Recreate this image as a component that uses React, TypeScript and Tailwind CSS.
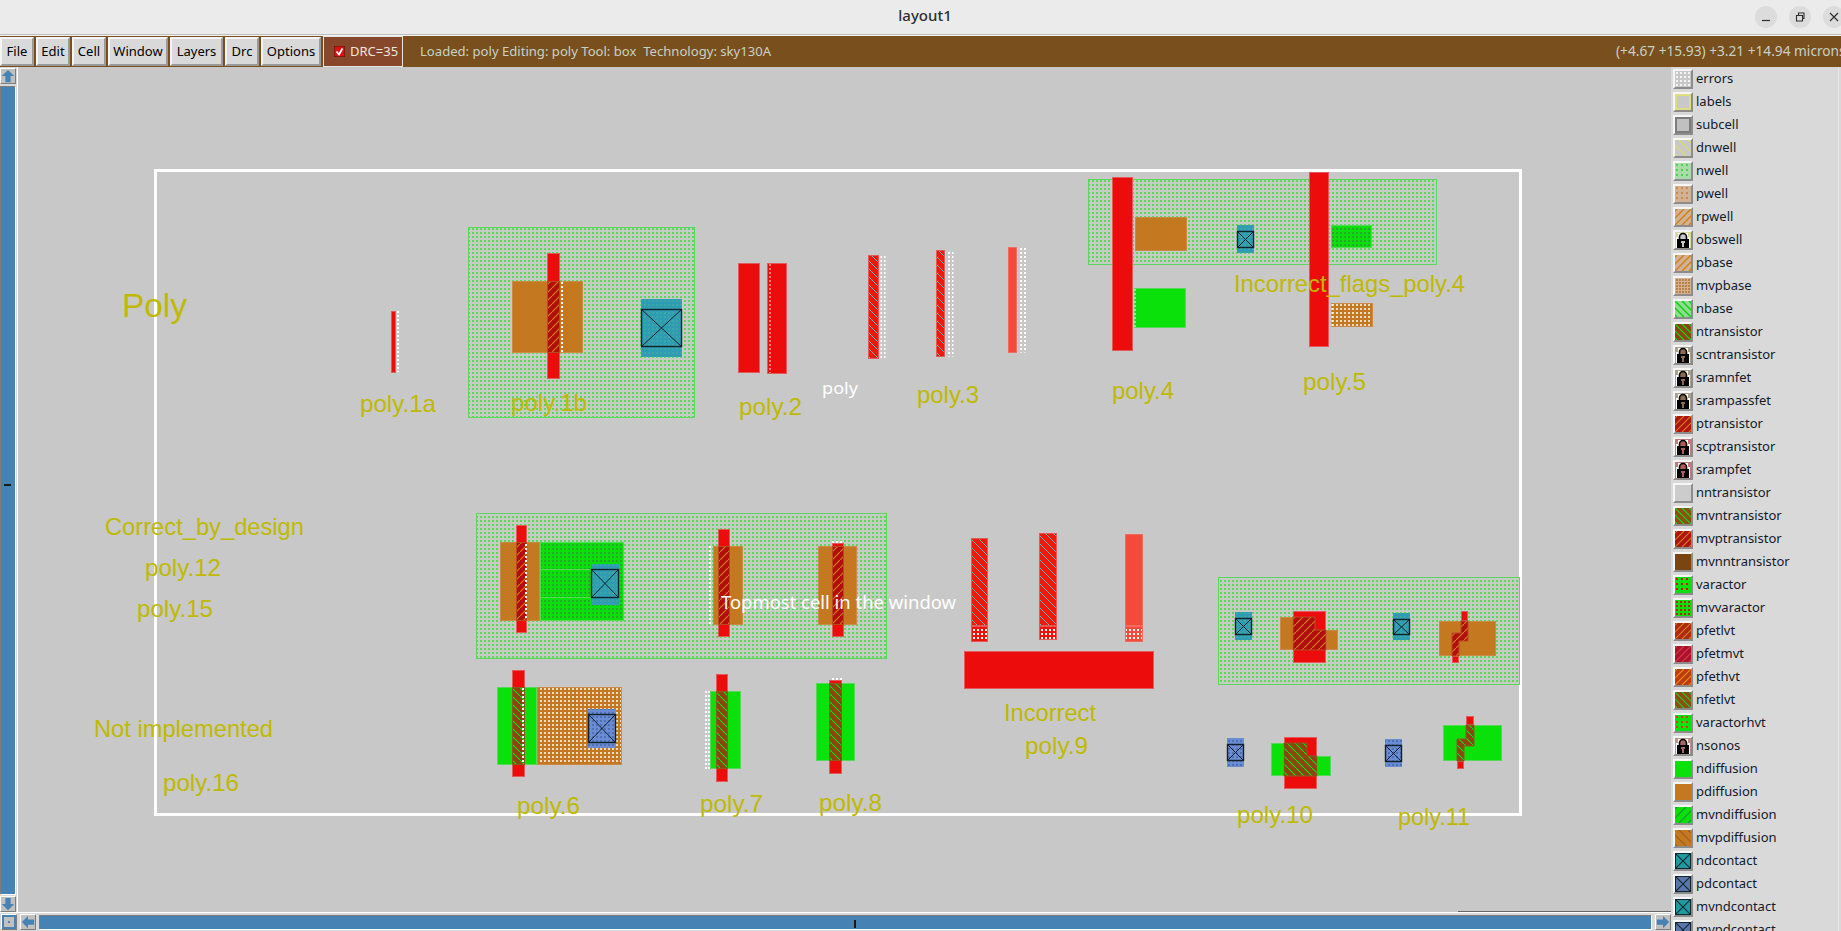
import type { ReactNode } from "react";

type Kind = "poly" | "polyL" | "pdiff" | "ndiff" | "ptr" | "ntr" | "hatch" | "nwell" | "pdots" | "ndots" | "white" | "polyDots" | "polyLDots";

const KINDS: Record<Kind, { fill: string; stroke: string }> = {
  poly: { fill: "#ec0c0c", stroke: "#e25a5a" },
  polyL: { fill: "#f44a3c", stroke: "#f56b60" },
  pdiff: { fill: "#c47820", stroke: "#cc8a48" },
  ndiff: { fill: "#0ae00a", stroke: "#58d858" },
  ptr: { fill: "url(#ptr)", stroke: "#b84a20" },
  ntr: { fill: "url(#ntr)", stroke: "#8a5a20" },
  hatch: { fill: "url(#hatch)", stroke: "#e25a5a" },
  nwell: { fill: "url(#nwell)", stroke: "#5cd85c" },
  pdots: { fill: "url(#pdots)", stroke: "#cc8a48" },
  ndots: { fill: "url(#ndots)", stroke: "#58d858" },
  white: { fill: "url(#wdots)", stroke: "none" },
  polyDots: { fill: "url(#polyDots)", stroke: "#e25a5a" },
  polyLDots: { fill: "url(#polyLDots)", stroke: "#f56b60" },
};

// x1, y1, x2, y2 in page pixels, same numbers as measured off the screenshot
type Rect = [Kind, number, number, number, number];

const RECTS: Rect[] = [
  ["poly", 391, 311, 396, 373],

  ["nwell", 468, 227, 695, 418],
  ["pdiff", 512, 281, 583, 353],
  ["poly", 547, 253, 560, 379],
  ["ptr", 547, 281, 560, 353],

  ["poly", 738, 263, 760, 373],
  ["poly", 767, 263, 787, 374],

  ["hatch", 868, 255, 879, 359],
  ["white", 880, 255, 886, 359],
  ["hatch", 936, 250, 945, 357],
  ["white", 945, 250, 954, 357],
  ["polyL", 1008, 247, 1017, 353],
  ["white", 1017, 247, 1027, 353],

  ["nwell", 1088, 179, 1437, 265],
  ["poly", 1112, 177, 1133, 351],
  ["pdiff", 1135, 217, 1187, 251],
  ["ndiff", 1134, 288, 1186, 328],
  ["poly", 1309, 172, 1329, 347],
  ["ndots", 1331, 225, 1372, 248],
  ["pdots", 1331, 303, 1373, 327],

  ["nwell", 476, 513, 887, 659],
  ["pdiff", 500, 542, 540, 621],
  ["ndots", 540, 542, 624, 621],
  ["poly", 516, 525, 527, 633],
  ["ptr", 516, 542, 527, 621],
  ["pdiff", 713, 546, 743, 625],
  ["poly", 718, 529, 730, 637],
  ["ptr", 718, 546, 730, 625],
  ["pdiff", 818, 546, 857, 625],
  ["poly", 832, 543, 844, 637],
  ["ptr", 832, 546, 844, 625],

  ["ndiff", 497, 687, 537, 765],
  ["pdots", 537, 687, 622, 765],
  ["poly", 512, 670, 525, 777],
  ["ntr", 512, 687, 525, 765],
  ["ndiff", 710, 691, 741, 769],
  ["poly", 716, 674, 728, 782],
  ["ntr", 716, 691, 728, 769],
  ["ndiff", 816, 683, 855, 761],
  ["poly", 829, 680, 842, 774],
  ["ntr", 829, 683, 842, 761],

  ["hatch", 971, 538, 988, 626],
  ["polyDots", 971, 626, 988, 642],
  ["hatch", 1039, 533, 1057, 626],
  ["polyDots", 1039, 626, 1057, 640],
  ["polyL", 1125, 534, 1143, 626],
  ["polyLDots", 1125, 626, 1143, 642],
  ["poly", 964, 651, 1154, 689],

  ["nwell", 1218, 577, 1520, 685],
  ["pdiff", 1280, 617, 1293, 650],
  ["pdiff", 1326, 630, 1338, 650],
  ["poly", 1293, 611, 1326, 663],
  ["pdiff", 1439, 621, 1496, 656],
  ["poly", 1461, 611, 1468, 621],
  ["poly", 1452, 656, 1459, 663],

  ["ndiff", 1271, 743, 1284, 776],
  ["ndiff", 1317, 756, 1331, 776],
  ["poly", 1284, 737, 1317, 789],
  ["ndiff", 1443, 725, 1502, 761],
  ["poly", 1466, 716, 1474, 725],
  ["poly", 1457, 761, 1464, 769],
];

// error dots along an edge: x, y1, y2, width
const DOT_LINES: [number, number, number, number][] = [
  [398, 311, 372, 2],
  [562, 282, 352, 2],
  [526, 544, 620, 2],
  [710, 546, 624, 2],
  [523, 688, 764, 2],
  [706, 691, 769, 2],
  [709, 691, 769, 2],
  [1135, 289, 327, 1],
  [1332, 304, 326, 1],
  [770, 264, 373, 1],
];

const SHAPES: { kind: Kind; points: string }[] = [
  { kind: "ptr", points: "1293,617 1315,617 1315,630 1326,630 1326,650 1293,650" },
  { kind: "ptr", points: "1461,621 1468,621 1468,641 1459,641 1459,656 1452,656 1452,633 1461,633" },
  { kind: "ntr", points: "1284,743 1307,743 1307,756 1317,756 1317,776 1284,776" },
  { kind: "ntr", points: "1466,725 1474,725 1474,746 1464,746 1464,761 1457,761 1457,739 1466,739" },
];

// x1, x2, outer top, outer bottom, box top, box bottom
const CONTACTS: { n: boolean; c: [number, number, number, number, number, number] }[] = [
  { n: true, c: [641, 682, 299, 357, 309, 347] },
  { n: true, c: [1237, 1254, 225, 253, 231, 248] },
  { n: true, c: [591, 619, 564, 605, 569, 598] },
  { n: false, c: [588, 616, 709, 748, 714, 743] },
  { n: true, c: [1235, 1252, 612, 640, 618, 635] },
  { n: true, c: [1393, 1410, 613, 640, 619, 635] },
  { n: false, c: [1227, 1244, 738, 767, 744, 761] },
  { n: false, c: [1385, 1402, 739, 767, 745, 762] },
];

// text, x1, x2, baseline, size
const LABELS: [string, number, number, number, number][] = [
  ["Poly", 122, 187, 317, 33],
  ["poly.1a", 360, 436, 412, 24],
  ["poly.1b", 511, 587, 411, 24],
  ["poly.2", 739, 802, 415, 24],
  ["poly.3", 917, 979, 403, 24],
  ["poly.4", 1112, 1174, 399, 24],
  ["poly.5", 1303, 1366, 390, 24],
  ["Incorrect_flags_poly.4", 1234, 1465, 292, 24],
  ["Correct_by_design", 105, 304, 535, 24],
  ["poly.12", 145, 221, 576, 24],
  ["poly.15", 137, 213, 617, 24],
  ["Not implemented", 94, 273, 737, 24],
  ["poly.16", 163, 239, 791, 24],
  ["Incorrect", 1004, 1096, 721, 24],
  ["poly.9", 1025, 1088, 754, 24],
  ["poly.6", 517, 580, 814, 24],
  ["poly.7", 700, 763, 812, 24],
  ["poly.8", 819, 882, 811, 24],
  ["poly.10", 1237, 1313, 823, 24],
  ["poly.11", 1398, 1470, 825, 24],
];

type Icon =
  | { t: "solid"; bg: string; border?: string }
  | { t: "fwd" | "back"; bg: string; fg: string; w?: number; step?: number }
  | { t: "dots"; bg: string; fg: string; step?: number }
  | { t: "lock"; bg: string; key: string }
  | { t: "contact"; bg: string };

const TEAL: Icon = { t: "contact", bg: "#1f9a9f" };
const BLUE: Icon = { t: "contact", bg: "#5c75ad" };
const PTR: Icon = { t: "fwd", bg: "#ae1410", fg: "#d07a20" };
const LOCK_N: Icon = { t: "lock", bg: "#a9a08a", key: "#8a6a50" };
const LOCK_P: Icon = { t: "lock", bg: "#c47a7a", key: "#b05a5a" };

const LAYERS: [string, Icon][] = [
  ["errors", { t: "dots", bg: "#c8c8c8", fg: "#f4f4f4", step: 4 }],
  ["labels", { t: "solid", bg: "#c8c8c8", border: "#e0dc80" }],
  ["subcell", { t: "solid", bg: "#c0c0c0", border: "#7c7c7c" }],
  ["dnwell", { t: "back", bg: "#c8c8c8", fg: "#dcdc60", step: 9 }],
  ["nwell", { t: "dots", bg: "#a8dca8", fg: "#50d050", step: 5 }],
  ["pwell", { t: "dots", bg: "#d2b292", fg: "#c88c50", step: 5 }],
  ["rpwell", { t: "fwd", bg: "#d2b292", fg: "#d0801c", w: 1.5 }],
  ["obswell", { t: "lock", bg: "#d8d8a0", key: "#c8c8c8" }],
  ["pbase", { t: "fwd", bg: "#d2b292", fg: "#d0801c", w: 1.5 }],
  ["mvpbase", { t: "dots", bg: "#d2b292", fg: "#b8824a", step: 3 }],
  ["nbase", { t: "back", bg: "#90dc90", fg: "#10d010", w: 1.5 }],
  ["ntransistor", { t: "back", bg: "#8a4510", fg: "#10e010" }],
  ["scntransistor", LOCK_N],
  ["sramnfet", LOCK_N],
  ["srampassfet", LOCK_N],
  ["ptransistor", PTR],
  ["scptransistor", LOCK_P],
  ["srampfet", LOCK_P],
  ["nntransistor", { t: "solid", bg: "#cccccc" }],
  ["mvntransistor", { t: "back", bg: "#8a5010", fg: "#20d020" }],
  ["mvptransistor", PTR],
  ["mvnntransistor", { t: "solid", bg: "#7a4510" }],
  ["varactor", { t: "dots", bg: "#0ae00a", fg: "#d81010", step: 5 }],
  ["mvvaractor", { t: "dots", bg: "#0ae00a", fg: "#c81818", step: 4 }],
  ["pfetlvt", { t: "fwd", bg: "#b02810", fg: "#d08020" }],
  ["pfetmvt", { t: "fwd", bg: "#b01030", fg: "#d04040" }],
  ["pfethvt", { t: "fwd", bg: "#c03a10", fg: "#e09020" }],
  ["nfetlvt", { t: "back", bg: "#8a5010", fg: "#30c030" }],
  ["varactorhvt", { t: "dots", bg: "#0ae00a", fg: "#e03818", step: 5 }],
  ["nsonos", { t: "lock", bg: "#c09088", key: "#a86868" }],
  ["ndiffusion", { t: "solid", bg: "#0ae00a" }],
  ["pdiffusion", { t: "solid", bg: "#c47820" }],
  ["mvndiffusion", { t: "fwd", bg: "#0ae00a", fg: "#109a30", step: 9 }],
  ["mvpdiffusion", { t: "back", bg: "#c47820", fg: "#a06020", step: 9 }],
  ["ndcontact", TEAL],
  ["pdcontact", BLUE],
  ["mvndcontact", TEAL],
  ["mvpdcontact", BLUE],
];

function IconArt({ icon }: { icon: Icon }) {
  const offsets: number[] = [];
  if (icon.t === "fwd" || icon.t === "back") {
    const step = icon.step ?? 7;
    for (let i = -14; i < 34; i += step) offsets.push(i);
  }
  return (
    <svg width="16" height="16" viewBox="0 0 16 16" className="block">
      <rect width="16" height="16" fill={icon.bg} />
      {icon.t === "solid" && icon.border && (
        <rect x="1" y="1" width="14" height="14" fill="none" stroke={icon.border} strokeWidth="2" />
      )}
      {icon.t === "fwd" &&
        offsets.map((o) => <line key={o} x1={o} y1="16" x2={o + 16} y2="0" stroke={icon.fg} strokeWidth={icon.w ?? 1.2} />)}
      {icon.t === "back" &&
        offsets.map((o) => <line key={o} x1={o} y1="0" x2={o + 16} y2="16" stroke={icon.fg} strokeWidth={icon.w ?? 1.2} />)}
      {icon.t === "dots" && <IconDots fg={icon.fg} step={icon.step ?? 5} />}
      {icon.t === "lock" && (
        <>
          <path d="M1 16V5H3V1H13V5H15V16Z" fill="#fff" />
          <path d="M4.5 8V5a3.5 3.5 0 0 1 7 0v3" fill={icon.key} stroke="#000" strokeWidth="1.6" />
          <rect x="2" y="7" width="12" height="9" fill="#000" />
          <rect x="7" y="10" width="2" height="5" fill={icon.key} />
          <rect x="6" y="9" width="4" height="2" fill={icon.key} />
        </>
      )}
      {icon.t === "contact" && (
        <>
          <rect x="0.5" y="0.5" width="15" height="15" fill="none" stroke="#10282c" />
          <path d="M0 0L16 16M16 0L0 16" stroke="#10282c" strokeWidth="1.1" />
        </>
      )}
    </svg>
  );
}

function IconDots({ fg, step }: { fg: string; step: number }) {
  const cells: ReactNode[] = [];
  for (let y = 1; y < 16; y += step) {
    for (let x = 1; x < 16; x += step) {
      cells.push(<rect key={`${x}-${y}`} x={x} y={y} width="2" height="2" fill={fg} />);
    }
  }
  return <>{cells}</>;
}

function ArrowButton({ dir }: { dir: "up" | "down" | "left" | "right" }) {
  const paths = {
    up: "M8 1L15 8H11V15H5V8H1Z",
    down: "M8 15L1 8H5V1H11V8H15Z",
    left: "M1 8L8 1V5H15V11H8V15Z",
    right: "M15 8L8 1V5H1V11H8V15Z",
  };
  return (
    <div className="w-[16px] h-[16px] shrink-0 bg-[#c0c0c0] border border-t-white border-l-white border-b-[#7c7c7c] border-r-[#7c7c7c]">
      <svg width="14" height="14" viewBox="0 0 16 16" className="block">
        <path d={paths[dir]} fill="#4682b4" />
      </svg>
    </div>
  );
}

function MenuButton({ label, width }: { label: string; width: string }) {
  return (
    <div className={`${width} h-[29px] flex items-center justify-center bg-[#d9d9d9] border-2 border-t-[#f4f4f4] border-l-[#f4f4f4] border-b-[#9a9a9a] border-r-[#9a9a9a] text-[13px] text-black`}>
      {label}
    </div>
  );
}

function Canvas() {
  return (
    <svg viewBox="18 67 1653 845" className="block w-[1653px] h-[845px]">
      <defs>
        <pattern id="nwell" width="4" height="4" patternUnits="userSpaceOnUse">
          <rect width="4" height="4" fill="#c4ccc4" />
          <rect width="2" height="2" fill="#5ed65e" />
        </pattern>
        <pattern id="wdots" width="4" height="4" patternUnits="userSpaceOnUse">
          <rect width="2" height="2" fill="#fff" />
        </pattern>
        <pattern id="ptr" width="8" height="8" patternUnits="userSpaceOnUse">
          <rect width="8" height="8" fill="#b30e0e" />
          <path d="M-1 9L9 -1" stroke="#d08020" strokeWidth="1.1" />
        </pattern>
        <pattern id="ntr" width="8" height="8" patternUnits="userSpaceOnUse">
          <rect width="8" height="8" fill="#8c4410" />
          <path d="M-1 -1L9 9" stroke="#10e010" strokeWidth="1.1" />
        </pattern>
        <pattern id="hatch" width="8" height="8" patternUnits="userSpaceOnUse">
          <rect width="8" height="8" fill="#f01808" />
          <path d="M-1 -1L9 9" stroke="#78c4c8" strokeWidth="0.9" />
        </pattern>
        <pattern id="pdots" width="4" height="4" patternUnits="userSpaceOnUse">
          <rect width="4" height="4" fill="#c47820" />
          <rect width="2" height="2" fill="#ecdcc4" />
        </pattern>
        <pattern id="ndots" width="4" height="4" patternUnits="userSpaceOnUse">
          <rect width="4" height="4" fill="#0ae00a" />
          <rect width="2" height="2" fill="#28a828" />
        </pattern>
        <pattern id="polyDots" width="4" height="4" patternUnits="userSpaceOnUse">
          <rect width="4" height="4" fill="#ec1408" />
          <rect x="1" y="1" width="2" height="2" fill="#fff" />
        </pattern>
        <pattern id="polyLDots" width="4" height="4" patternUnits="userSpaceOnUse">
          <rect width="4" height="4" fill="#f44a3c" />
          <rect x="1" y="1" width="2" height="2" fill="#fff" />
        </pattern>
        <pattern id="ncut" width="4" height="4" patternUnits="userSpaceOnUse">
          <rect width="4" height="4" fill="#2e9db4" />
          <rect width="2" height="2" fill="#3aa6a8" />
        </pattern>
        <pattern id="pcut" width="4" height="4" patternUnits="userSpaceOnUse">
          <rect width="4" height="4" fill="#6a8cd4" />
          <rect width="2" height="2" fill="#5270b4" />
        </pattern>
      </defs>

      <rect x="155.5" y="170.5" width="1365" height="644" fill="none" stroke="#fff" strokeWidth="3" />

      {RECTS.map(([kind, x1, y1, x2, y2], i) => (
        <rect
          key={i}
          x={x1 + 0.5}
          y={y1 + 0.5}
          width={x2 - x1 - 1}
          height={y2 - y1 - 1}
          fill={KINDS[kind].fill}
          stroke={KINDS[kind].stroke}
        />
      ))}
      {SHAPES.map((s) => (
        <polygon key={s.points} points={s.points} fill={KINDS[s.kind].fill} stroke={KINDS[s.kind].stroke} />
      ))}
      {DOT_LINES.map(([x, y1, y2, w]) => (
        <line key={`${x}-${y1}`} x1={x} y1={y1} x2={x} y2={y2} stroke="#fff" strokeWidth={w} strokeDasharray="2 2" />
      ))}
      <line x1="832" y1="679" x2="842" y2="679" stroke="#fff" strokeWidth="2" strokeDasharray="2 2" />
      <line x1="832" y1="542" x2="844" y2="542" stroke="#fff" strokeWidth="2" strokeDasharray="2 2" />
      <path d="M540 569.5H591M540 597.5H591" stroke="#58d858" />

      {CONTACTS.map(({ n, c: [x1, x2, t, b, bt, bb] }) => (
        <g key={`${x1}-${t}`}>
          <rect x={x1} y={t} width={x2 - x1} height={b - t} fill={n ? "url(#ncut)" : "url(#pcut)"} />
          <rect x={x1 + 0.5} y={bt + 0.5} width={x2 - x1 - 1} height={bb - bt - 1} fill="none" stroke="#10222c" strokeWidth="1.4" />
          <path d={`M${x1} ${bt}L${x2} ${bb}M${x2} ${bt}L${x1} ${bb}`} stroke="#10222c" strokeWidth="1" />
        </g>
      ))}

      {LABELS.map(([text, x1, x2, y, size]) => (
        <text
          key={text}
          x={x1}
          y={y}
          fontSize={size}
          textLength={x2 - x1}
          lengthAdjust="spacingAndGlyphs"
          fill="#bfb900"
          fontFamily="'Liberation Sans', sans-serif"
        >
          {text}
        </text>
      ))}

      <text x="822" y="394" fontSize="17" textLength="36" lengthAdjust="spacingAndGlyphs" fill="#fff" fontFamily="'Noto Sans', sans-serif">poly</text>
      <text x="721" y="609" fontSize="18" textLength="235" lengthAdjust="spacingAndGlyphs" fill="#fff" fontFamily="'Noto Sans', sans-serif">
        Topmost cell in the window
      </text>
    </svg>
  );
}

export default function App() {
  return (
    <div className="w-[1841px] h-[931px] overflow-hidden flex flex-col bg-[#d9d9d9] font-['Noto_Sans',sans-serif]">
      {/* Window title */}
      <div className="h-[34px] shrink-0 bg-[#ebebeb] grid grid-cols-[1fr_auto_1fr] items-center">
        <div />
        <div className="text-[15px] leading-[28px] pb-[4px] ml-[9px] font-medium text-[#2e2e2e]">layout1</div>
        <div className="flex justify-end gap-[12px] -mr-[4px]">
          <div className="w-[22px] h-[22px] rounded-full bg-[#dcdcdc] flex items-center justify-center">
            <svg width="10" height="10" viewBox="0 0 10 10"><path d="M1 8.5H9" stroke="#2e2e2e" strokeWidth="1.2" /></svg>
          </div>
          <div className="w-[22px] h-[22px] rounded-full bg-[#dcdcdc] flex items-center justify-center">
            <svg width="10" height="10" viewBox="0 0 10 10"><path d="M1.5 3.5H7.5V9H1.5ZM3.5 3.5V1H9V6.5H7.5" fill="none" stroke="#2e2e2e" strokeWidth="1.1" /></svg>
          </div>
          <div className="w-[22px] h-[22px] rounded-full bg-[#dcdcdc] flex items-center justify-center">
            <svg width="10" height="10" viewBox="0 0 10 10"><path d="M1 1L9 9M9 1L1 9" stroke="#2e2e2e" strokeWidth="1.2" /></svg>
          </div>
        </div>
      </div>
      <div className="h-px shrink-0 bg-[#bdbdbd]" />
      <div className="h-px shrink-0 bg-[#f4f4f4]" />

      {/* Toolbar */}
      <div className="h-[31px] shrink-0 bg-[#784f1d] flex items-center gap-[2px] whitespace-nowrap overflow-hidden">
        <MenuButton label="File" width="w-[34px]" />
        <MenuButton label="Edit" width="w-[34px]" />
        <MenuButton label="Cell" width="w-[34px]" />
        <MenuButton label="Window" width="w-[60px]" />
        <MenuButton label="Layers" width="w-[53px]" />
        <MenuButton label="Drc" width="w-[34px]" />
        <MenuButton label="Options" width="w-[60px]" />
        <div className="w-[80px] h-[31px] flex items-center pl-[10px] gap-[5px] bg-[#86472a] border border-[#e4e4e4] text-[13px] text-[#f2e6de]">
          <svg width="11" height="11" viewBox="0 0 11 11" className="shrink-0">
            <rect width="11" height="11" fill="#e01010" stroke="#3a1a10" />
            <path d="M2.5 5.5L5 8.5L8.5 2.5" fill="none" stroke="#fff" strokeWidth="1.8" />
          </svg>
          DRC=35
        </div>
        <div className="ml-[15px] text-[13.1px] text-[#c6d2c6] whitespace-pre">Loaded: poly Editing: poly Tool: box  Technology: sky130A</div>
        <div className="ml-auto w-[225px] shrink-0 text-[13.7px] text-[#c6d2c6] overflow-hidden">(+4.67 +15.93) +3.21 +14.94 microns</div>
      </div>

      <div className="flex-1 flex min-h-0">
        <div className="w-[1671px] shrink-0 flex flex-col">
          <div className="flex h-[845px] shrink-0">
            {/* Vertical scrollbar */}
            <div className="w-[18px] shrink-0 flex flex-col items-center pt-[1px] pr-[2px] gap-[2px] border-r border-white">
              <ArrowButton dir="up" />
              <div className="relative flex-1 w-[15px] bg-[#4682b4] border-l border-t border-[#7c7c7c] shadow-[1px_1px_0_#fff]">
                <div className="absolute left-[3px] top-[397px] w-[7px] h-[2px] bg-[#1a1a1a]" />
              </div>
              <ArrowButton dir="down" />
            </div>
            <div className="flex-1 bg-[#c8c8c8]">
              <Canvas />
            </div>
          </div>

          {/* Horizontal scrollbar */}
          <div className="relative flex-1 flex items-center gap-[3px] pl-[1px] border-t border-white">
            <div className="absolute right-0 -top-[2px] w-[213px] h-px bg-[#666666]" />
            <div className="w-[16px] h-[16px] shrink-0 bg-[#4682b4] border border-t-white border-l-white border-b-[#7c7c7c] border-r-[#7c7c7c] flex items-center justify-center">
              <div className="w-[10px] h-[10px] bg-[#c0c0c0] flex items-center justify-center">
                <div className="w-[2px] h-[2px] bg-[#4682b4]" />
              </div>
            </div>
            <ArrowButton dir="left" />
            <div className="relative w-[1612px] h-[14px] bg-[#4682b4] border-l border-t border-[#7c7c7c] shadow-[1px_1px_0_#fff]">
              <div className="absolute left-[814px] top-[4px] w-[2px] h-[8px] bg-[#1a1a1a]" />
            </div>
            <div className="ml-[1px]">
              <ArrowButton dir="right" />
            </div>
          </div>
        </div>

        {/* Layer list */}
        <div className="flex-1 flex min-w-0 overflow-hidden">
          <div className="flex-1 flex flex-col gap-[3px] pt-[2px] pl-[2px] overflow-hidden">
            {LAYERS.map(([name, icon]) => (
              <div key={name} className="h-[20px] shrink-0 flex items-center gap-[3px] text-[13px] text-[#12192b]">
                <div className="w-[20px] h-[20px] shrink-0 border-2 border-t-[#f6f6f6] border-l-[#f6f6f6] border-b-[#8c8c8c] border-r-[#8c8c8c]">
                  <IconArt icon={icon} />
                </div>
                {name}
              </div>
            ))}
          </div>
          <div className="w-[3px] shrink-0 border-l border-[#e6e6e6]" />
        </div>
      </div>
    </div>
  );
}
